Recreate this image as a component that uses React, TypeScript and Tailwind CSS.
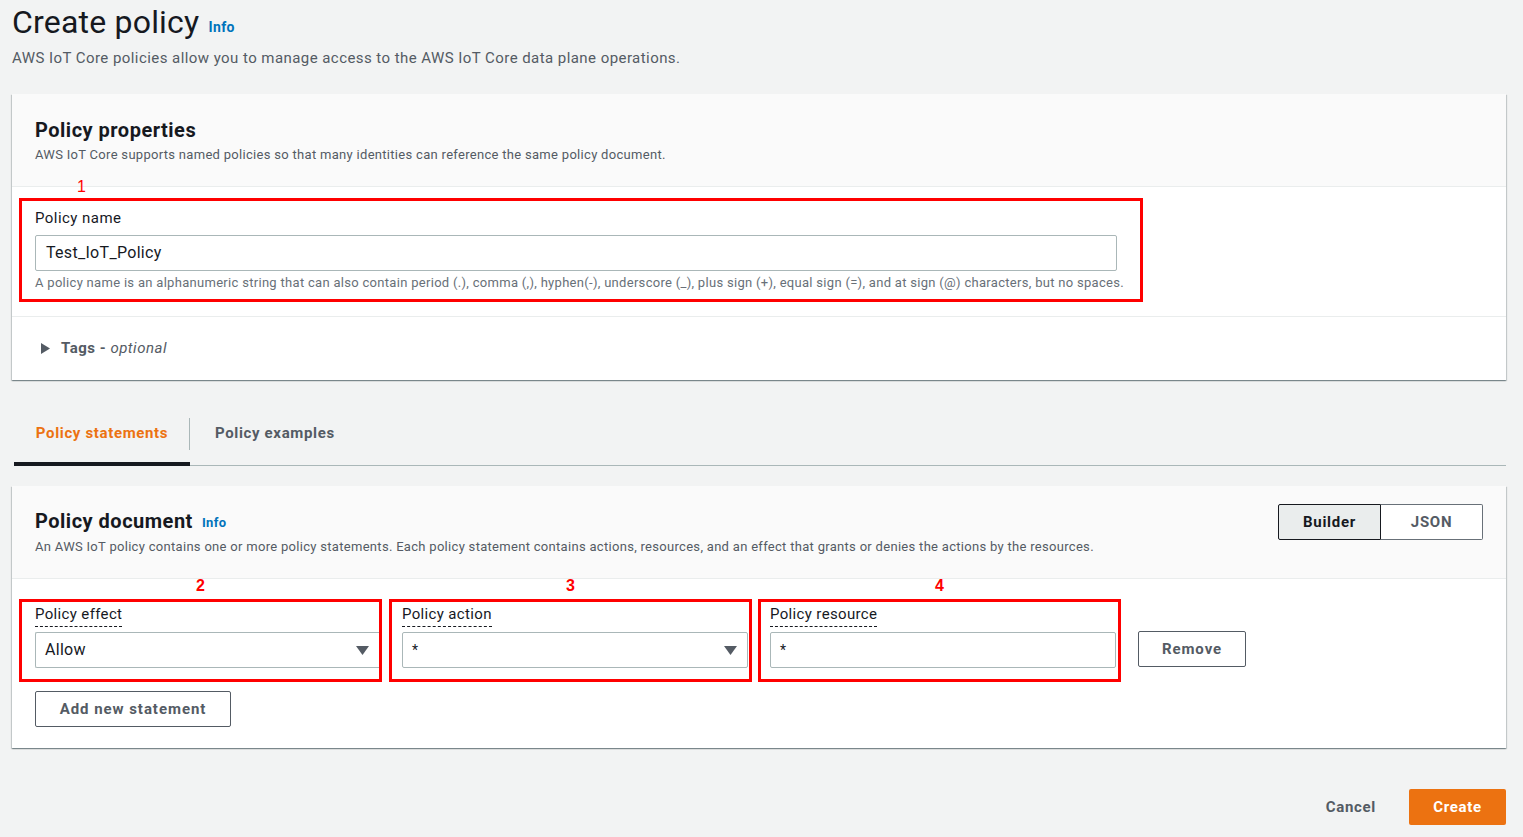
const FONT = { fontFamily: "Roboto, 'Open Sans', sans-serif" };

const Caret = () => (
  <svg width="13" height="9" viewBox="0 0 13 9" className="shrink-0">
    <path d="M0 0 H13 L6.5 9 Z" fill="#545b64" />
  </svg>
);

const Info = ({ size = "text-[13px]" }: { size?: string }) => (
  <span className={`${size} font-bold text-[#0073bb] ml-[9px] tracking-[0.4px]`}>Info</span>
);

const Num = ({ n, bold = true }: { n: string; bold?: boolean }) => (
  <span
    className={`text-[16px] leading-none text-[#ff0000] ${bold ? "font-bold" : ""}`}
    style={{ fontFamily: "'Liberation Sans', Arial, sans-serif" }}
  >
    {n}
  </span>
);

const DashedLabel = ({ text }: { text: string }) => (
  <div className="h-[25px] flex items-start">
    <span className="text-[15px] leading-[20px] tracking-[0.35px] text-[#16191f] border-b border-dashed border-[#16191f] pb-[2px]">
      {text}
    </span>
  </div>
);

const cardShadow =
  "shadow-[0_1px_1px_0_rgba(0,28,36,0.3),1px_1px_1px_0_rgba(0,28,36,0.15),-1px_1px_1px_0_rgba(0,28,36,0.15)]";

export default function App() {
  return (
    <div className="min-h-[837px] bg-[#f2f3f3] pl-[12px] pr-[17px]" style={FONT}>
      {/* Page header */}
      <div className="h-[44px] flex items-center">
        <h1 className="text-[32px] leading-[44px] font-normal text-[#16191f] tracking-[0.2px]">Create policy</h1>
        <Info size="text-[14px] mt-[11px]" />
      </div>
      <p className="text-[15px] leading-[26px] text-[#545b64] tracking-[0.44px] mt-[1px]">
        AWS IoT Core policies allow you to manage access to the AWS IoT Core data plane operations.
      </p>

      {/* Policy properties card */}
      <div className={`mt-[23px] bg-white ${cardShadow}`}>
        <div className="h-[93px] bg-[#fafafa] border-b border-[#eaeded] px-[23px] pt-[23px]">
          <h2 className="text-[20px] leading-[26px] font-bold text-[#16191f] tracking-[0.5px]">Policy properties</h2>
          <p className="text-[13px] leading-[20px] text-[#545b64] mt-[2px] tracking-[0.3px]">
            AWS IoT Core supports named policies so that many identities can reference the same policy document.
          </p>
        </div>
        <div className="pt-[11px] pb-[14px] border-b border-[#eaeded]">
          <div className="relative ml-[7px] w-[1124px] h-[104px] border-[3px] border-[#ff0000] pl-[13px] pr-[23px] pt-[5px]">
            <div className="absolute left-[55px] -top-[26px]">
              <Num n="1" bold={false} />
            </div>
            <div className="text-[15px] leading-[24px] text-[#16191f] tracking-[0.45px]">Policy name</div>
            <div className="mt-[5px] h-[36px] border border-[#aab7b8] rounded-[2px] flex items-center px-[10px] text-[16px] text-[#16191f] tracking-[0.3px]">
              Test_IoT_Policy
            </div>
            <p className="mt-[1px] text-[13px] leading-[22px] text-[#687078] whitespace-nowrap tracking-[0.3px]">
              A policy name is an alphanumeric string that can also contain period (.), comma (,), hyphen(-), underscore (_), plus sign (+), equal sign (=), and at sign (@) characters, but no spaces.
            </p>
          </div>
        </div>
        <div className="h-[63px] flex items-center pl-[29px] gap-[11px]">
          <svg width="9" height="11" viewBox="0 0 9 11">
            <path d="M0 0 L9 5.5 L0 11 Z" fill="#545b64" />
          </svg>
          <span className="text-[15px] text-[#545b64] tracking-[0.5px]">
            <span className="font-bold">Tags - </span>
            <span className="italic">optional</span>
          </span>
        </div>
      </div>

      {/* Tabs */}
      <div className="mt-[30px] flex border-b border-[#aab7b8] h-[56px] ml-[2px]">
        <div className="w-[176px] flex items-start justify-center pt-[13px] border-b-[4px] border-[#16191f] -mb-[1px] relative">
          <span className="text-[15px] leading-[20px] font-bold text-[#ec7211] tracking-[0.65px]">Policy statements</span>
          <div className="absolute right-0 top-[8px] h-[32px] w-px bg-[#aab7b8]" />
        </div>
        <div className="flex items-start pt-[13px] pl-[25px]">
          <span className="text-[15px] leading-[20px] font-bold text-[#545b64] tracking-[0.65px]">Policy examples</span>
        </div>
      </div>

      {/* Policy document card */}
      <div className={`mt-[20px] bg-white ${cardShadow}`}>
        <div className="h-[93px] bg-[#fafafa] border-b border-[#eaeded] px-[23px] pt-[22px] flex justify-between">
          <div>
            <div className="flex items-center">
              <h2 className="text-[20px] leading-[26px] font-bold text-[#16191f] tracking-[0.5px]">Policy document</h2>
              <Info size="text-[13px] mt-[3px]" />
            </div>
            <p className="text-[13px] leading-[20px] text-[#545b64] mt-[3px] tracking-[0.3px]">
              An AWS IoT policy contains one or more policy statements. Each policy statement contains actions, resources, and an effect that grants or denies the actions by the resources.
            </p>
          </div>
          <div className="flex h-[36px] -mt-[4px]">
            <button className="w-[103px] bg-[#eaeded] border border-[#16191f] rounded-l-[2px] text-[15px] font-bold text-[#16191f] tracking-[0.7px]">
              Builder
            </button>
            <button className="w-[102px] bg-white border border-l-0 border-[#687078] rounded-r-[2px] text-[15px] font-bold text-[#545b64] tracking-[0.7px]">
              JSON
            </button>
          </div>
        </div>

        <div className="pt-[20px] pb-[21px]">
          <div className="flex items-start">
            {/* 2 */}
            <div className="relative ml-[7px] w-[363px] h-[83px] border-[3px] border-[#ff0000] pl-[13px] pt-[2px]">
              <div className="absolute left-0 right-0 -top-[24px] flex justify-center">
                <Num n="2" />
              </div>
              <DashedLabel text="Policy effect" />
              <div className="mt-[3px] h-[36px] border border-[#aab7b8] border-r-0 rounded-l-[2px] flex items-center justify-between pl-[9px] pr-[10px] text-[16px] text-[#16191f] tracking-[0.3px]">
                Allow
                <Caret />
              </div>
            </div>
            {/* 3 */}
            <div className="relative ml-[7px] w-[363px] h-[83px] border-[3px] border-[#ff0000] pl-[10px] pr-[1px] pt-[2px]">
              <div className="absolute left-0 right-0 -top-[24px] flex justify-center">
                <Num n="3" />
              </div>
              <DashedLabel text="Policy action" />
              <div className="mt-[3px] h-[36px] border border-[#aab7b8] rounded-[2px] flex items-center justify-between pl-[9px] pr-[10px] text-[14px] text-[#16191f]">
                *
                <Caret />
              </div>
            </div>
            {/* 4 */}
            <div className="relative ml-[6px] w-[363px] h-[83px] border-[3px] border-[#ff0000] pl-[9px] pr-[2px] pt-[2px]">
              <div className="absolute left-0 right-0 -top-[24px] flex justify-center">
                <Num n="4" />
              </div>
              <DashedLabel text="Policy resource" />
              <div className="mt-[3px] h-[36px] border border-[#aab7b8] rounded-[2px] flex items-center pl-[9px] text-[14px] text-[#16191f]">
                *
              </div>
            </div>
            <button className="ml-[17px] mt-[32px] w-[108px] h-[36px] border border-[#545b64] rounded-[2px] bg-white text-[15px] font-bold text-[#545b64] tracking-[0.9px]">
              Remove
            </button>
          </div>
          <button className="ml-[23px] mt-[9px] w-[196px] h-[36px] border border-[#545b64] rounded-[2px] bg-white text-[15px] font-bold text-[#545b64] tracking-[0.95px]">
            Add new statement
          </button>
        </div>
      </div>

      {/* Footer actions */}
      <div className="mt-[41px] flex justify-end items-center gap-[33px]">
        <button className="text-[15px] font-bold text-[#545b64] tracking-[0.7px]">Cancel</button>
        <button className="w-[97px] h-[36px] bg-[#ec7211] rounded-[2px] text-[15px] font-bold text-white tracking-[0.7px]">
          Create
        </button>
      </div>
    </div>
  );
}
